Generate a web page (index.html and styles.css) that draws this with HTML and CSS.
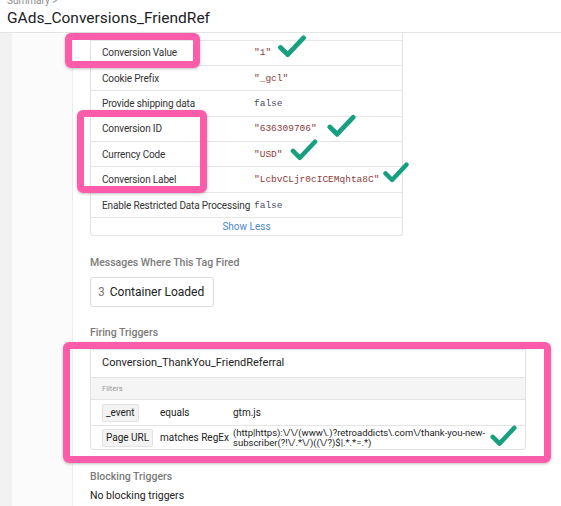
FILE: index.html
```html
<!DOCTYPE html>
<html>
<head>
<meta charset="utf-8">
<link rel="stylesheet" href="styles.css">
</head>
<body>
<header class="hdr">
  <div class="crumb">Summary &gt;</div>
  <h1 class="title">GAds_Conversions_FriendRef</h1>
</header>
<div class="main">
  <aside class="rail"></aside>
  <section class="panel">
    <div class="card params">
      <div class="row stub"></div>
      <div class="row"><span class="k">Conversion Value</span><span class="v str">"1"</span></div>
      <div class="row"><span class="k">Cookie Prefix</span><span class="v str">"_gcl"</span></div>
      <div class="row"><span class="k">Provide shipping data</span><span class="v bool">false</span></div>
      <div class="row"><span class="k">Conversion ID</span><span class="v str">"636309706"</span></div>
      <div class="row"><span class="k">Currency Code</span><span class="v str">"USD"</span></div>
      <div class="row"><span class="k">Conversion Label</span><span class="v str">"LcbvCLjr0cICEMqhta8C"</span></div>
      <div class="row"><span class="k">Enable Restricted Data Processing</span><span class="v bool">false</span></div>
      <div class="more">Show Less</div>
    </div>

    <h3 class="sec sec-msg">Messages Where This Tag Fired</h3>
    <div class="msg"><span class="num">3</span><span class="msg-t">Container Loaded</span></div>

    <h3 class="sec sec-fire">Firing Triggers</h3>
    <div class="card trig">
      <div class="trig-title">Conversion_ThankYou_FriendReferral</div>
      <div class="filters">Filters</div>
      <div class="frow">
        <span class="chip">_event</span><span class="op">equals</span><span class="val">gtm.js</span>
      </div>
      <div class="frow last">
        <span class="chip">Page URL</span><span class="op">matches RegEx</span><span class="val rx">(http|https):\/\/(www\.)?retroaddicts\.com\/thank-you-new-subscriber(?!\/.*\/)((\/?)$|.*.*=.*)</span>
      </div>
    </div>

    <h3 class="sec sec-block">Blocking Triggers</h3>
    <p class="none">No blocking triggers</p>
  </section>
</div>

<div class="hl hl1"></div>
<div class="hl hl2"></div>
<div class="hl hl3"></div>

<svg class="chk c1" viewBox="0 0 30 24"><path d="M3 13 L10.5 20.5 L27 3"/></svg>
<svg class="chk c2" viewBox="0 0 30 24"><path d="M3 13 L10.5 20.5 L27 3"/></svg>
<svg class="chk c3" viewBox="0 0 30 24"><path d="M3 13 L10.5 20.5 L27 3"/></svg>
<svg class="chk c4" viewBox="0 0 30 24"><path d="M3 13 L10.5 20.5 L27 3"/></svg>
<svg class="chk c5" viewBox="0 0 30 24"><path d="M3 13 L10.5 20.5 L27 3"/></svg>
</body>
</html>
```

FILE: styles.css
```css
* { box-sizing: border-box; }
html, body { margin: 0; padding: 0; }
body {
  width: 561px;
  height: 506px;
  overflow: hidden;
  background: #fff;
  font-family: Roboto, "Liberation Sans", sans-serif;
  color: #212121;
  position: relative;
}

.hdr {
  height: 33px;
  border-bottom: 1px solid #e3e3e3;
  padding-left: 7px;
  overflow: hidden;
}
.crumb {
  font-size: 10px;
  line-height: 10px;
  color: #8a8a8a;
  margin-top: -4px;
  height: 10px;
}
.title {
  margin: 3px 0 0;
  font-size: 15.5px;
  line-height: 18px;
  font-weight: 400;
  color: #202124;
}

.main {
  display: flex;
  height: 473px;
}
.rail {
  width: 73px;
  flex: none;
  background: linear-gradient(to right, #f2f2f2 0, #f2f2f2 12px, #fbfbfb 12px);
  border-right: 1px solid #ececec;
}
.panel {
  flex: 1;
  padding-left: 17px;
}

.card {
  background: #fff;
  border: 1px solid #e2e2e2;
  border-radius: 0 0 3px 3px;
}
.params {
  width: 313px;
  border-top: none;
}
.row {
  display: grid;
  grid-template-columns: 152px 1fr;
  align-items: center;
  padding-left: 11px;
  height: 25.4px;
  border-bottom: 1px solid #e6e6e6;
}
.row.stub { height: 7.5px; }
.k {
  font-size: 10px;
  letter-spacing: -0.15px;
  color: #333;
  white-space: nowrap;
}
.v {
  font-family: "Liberation Mono", "DejaVu Sans Mono", monospace;
  font-size: 9.5px;
}
.str { color: #8e3b3b; }
.bool { color: #4a4a66; }
.more {
  height: 17px;
  line-height: 17px;
  text-align: center;
  font-size: 10px;
  color: #4a88c8;
}

.sec {
  margin: 0;
  font-size: 10.5px;
  font-weight: 500;
  color: #7a7a7a;
  line-height: 14px;
}
.sec-msg { margin-top: 20px; }
.msg {
  margin-top: 7px;
  width: 124px;
  height: 30px;
  border: 1px solid #dedede;
  border-radius: 3px;
  display: flex;
  align-items: center;
  padding-left: 7px;
  gap: 5px;
}
.num { font-size: 12px; color: #777; }
.msg-t { font-size: 12px; color: #222; }
.sec-fire { margin-top: 19px; }

.trig {
  margin-top: 9px;
  width: 436px;
  border-top: 1px solid #e2e2e2;
}
.trig-title {
  height: 28px;
  line-height: 26px;
  padding-left: 11px;
  font-size: 11px;
  color: #222;
  border-bottom: 1px solid #e4e4e4;
}
.filters {
  height: 22px;
  line-height: 21px;
  background: #f5f5f5;
  border-bottom: 1px solid #e4e4e4;
  padding-left: 11px;
  font-size: 7.5px;
  color: #999;
}
.frow {
  display: grid;
  grid-template-columns: 58px 73px 1fr;
  align-items: center;
  padding-left: 11px;
  height: 26px;
  border-bottom: 1px solid #e4e4e4;
  font-size: 10px;
  color: #222;
}
.frow.last { height: 23px; border-bottom: none; }
.chip {
  justify-self: start;
  background: #f3f3f3;
  border: 1px solid #e2e2e2;
  border-radius: 2px;
  padding: 2px 3px;
  font-size: 10px;
  line-height: 12px;
  color: #222;
}
.rx {
  width: 258px;
  line-height: 9.5px;
  font-size: 9.5px;
}

.sec-block { margin-top: 20px; }
.none {
  margin: 6px 0 0;
  font-size: 10.5px;
  line-height: 12px;
  color: #222;
}

/* annotation overlays */
.hl {
  position: absolute;
  border: 7px solid #fb5dab;
  border-radius: 6px;
  box-shadow: 0 1px 3px rgba(0,0,0,0.25);
}
.hl1 { left: 65px; top: 33px; width: 135px; height: 35px; }
.hl2 { left: 77px; top: 110px; width: 130px; height: 83px; }
.hl3 { left: 63px; top: 342px; width: 488px; height: 121px; }

.chk {
  position: absolute;
  fill: none;
  stroke: #17a07e;
  stroke-width: 5;
  stroke-linecap: round;
  stroke-linejoin: round;
}
.c1 { left: 277px; top: 35px; width: 30px; height: 23px; }
.c2 { left: 327px; top: 114px; width: 29px; height: 24px; }
.c3 { left: 290px; top: 139px; width: 28px; height: 22px; }
.c4 { left: 382px; top: 162px; width: 28px; height: 21px; }
.c5 { left: 490px; top: 425px; width: 27px; height: 22px; }
```
